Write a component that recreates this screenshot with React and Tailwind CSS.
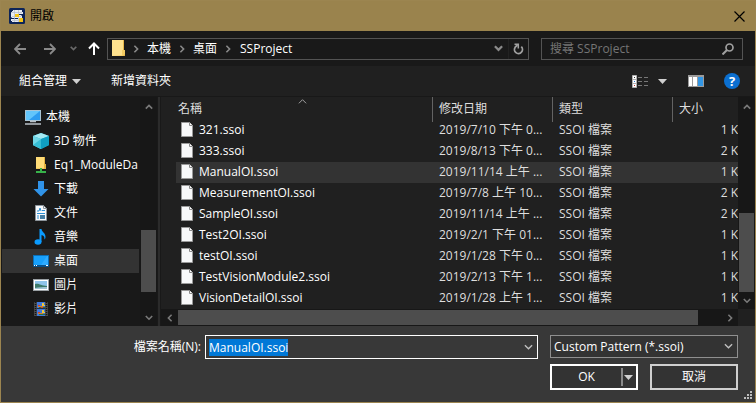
import { useEffect, useRef } from "react";

const FILES = [
  ["321.ssoi", "2019/7/10 下午 0...", "1 K"],
  ["333.ssoi", "2019/8/13 下午 0...", "2 K"],
  ["ManualOI.ssoi", "2019/11/14 上午 ...", "1 K"],
  ["MeasurementOI.ssoi", "2019/7/8 上午 10...", "2 K"],
  ["SampleOI.ssoi", "2019/11/14 上午 ...", "2 K"],
  ["Test2OI.ssoi", "2019/2/1 下午 01...", "1 K"],
  ["testOI.ssoi", "2019/1/28 下午 0...", "1 K"],
  ["TestVisionModule2.ssoi", "2019/2/13 下午 1...", "1 K"],
  ["VisionDetailOI.ssoi", "2019/1/28 上午 1...", "1 K"],
];

function Chevron({ dir = "down", size = 8, width = 2, className = "" }) {
  const d = {
    down: "M1 2.5 5 6.5 9 2.5",
    up: "M1 7 5 3 9 7",
    left: "M7 1 3 5 7 9",
    right: "M3 1 7 5 3 9",
  }[dir];
  return (
    <svg width={size} height={size} viewBox="0 0 10 10" fill="none" stroke="currentColor" strokeWidth={width} className={"shrink-0 " + className} aria-hidden="true">
      <path d={d} />
    </svg>
  );
}

function Caret() {
  return (
    <svg width="9" height="5" viewBox="0 0 9 5" fill="#d0d0d0" className="shrink-0" aria-hidden="true">
      <path d="M0 0h9L4.500 5z" />
    </svg>
  );
}

function AppIcon() {
  return (
    <svg width="16" height="16" viewBox="0 0 16 16" className="shrink-0" aria-hidden="true">
      <rect width="16" height="16" rx="1.500" fill="#0d2458" />
      <path d="M4 2h9v2h1v2H6v1h6l1 1v2h-3v4H3v-1H2v-2h7v-1H3L2 9V4h1V3h1z" fill="#e9ecf2" />
      <path d="M5.500 2v12M9.500 2v12M2 4.500h11M3 8.500h9M3 12.500h6" stroke="#b4bccb" strokeWidth=".7" />
      <rect x="6" y="6" width="4" height="3" fill="#f5c518" />
      <rect x="10" y="10" width="4" height="4" fill="#f5c518" />
    </svg>
  );
}

function FolderIcon() {
  return (
    <svg width="14" height="17" viewBox="0 0 14 17" className="shrink-0" aria-hidden="true">
      <path d="M1 0h12v10h1v6H1z" fill="#e8b84a" />
      <path d="M1 0h11v15.500L1 16z" fill="#ffe28e" />
      <path d="M11 10h3v4l-2 2h-1z" fill="#f4cc63" />
    </svg>
  );
}

function FileIcon() {
  return (
    <svg width="12" height="15" viewBox="0 0 12 15" className="shrink-0" aria-hidden="true">
      <path d="M.5.5h8l3 3v11H.5z" fill="#f8f9fa" stroke="#9a9a9a" />
      <path d="M8.500.5v3h3" fill="#fff" stroke="#8a8a8a" />
    </svg>
  );
}

const ICONS = {
  pc: (
    <>
      <rect x=".5" y="1.500" width="15" height="10" fill="#2d9cf0" stroke="#a9c4d4" />
      <path d="M1 2h14L4 11H1z" fill="#62c5fb" />
      <path d="M5 12.500h6M0 15h16" stroke="#b8c0c6" strokeWidth="1.500" />
    </>
  ),
  cube: (
    <>
      <path d="M0 3 8 0l8 3v9l-8 4-8-4z" fill="#22b8d4" />
      <path d="M0 3 8 0l8 3-8 3z" fill="#a5eaf3" />
      <path d="M0 3l8 3v10l-8-4z" fill="#6fd6e6" />
      <path d="M8 6l8-3v9l-8 4z" fill="#109fc2" />
      <path d="M0 12 8 6v10z" fill="#36bdd4" />
    </>
  ),
  netfolder: (
    <>
      <path d="M3 0h9v7h1v5H3z" fill="#e3b341" />
      <path d="M3 0h8v11.500H3z" fill="#ffdc77" />
      <path d="M8 11v4M3 15h10" stroke="#37b34a" strokeWidth="2" />
    </>
  ),
  download: <path d="M5 0h6v8h4.500L8 15.500.5 8H5z" fill="#3093e8" />,
  doc: (
    <>
      <path d="M2.500.5h8l3 3v12h-11z" fill="#f7f9fb" stroke="#8c949b" />
      <path d="M10.500.5v3h3" fill="none" stroke="#8c949b" />
      <path d="M4 6h2l1-3 1 3M9 5.500h3M4 8.500h8M4 11h2M4 13h2" stroke="#2a8fd6" fill="none" />
      <rect x="7" y="10" width="5" height="4" fill="#467fa5" />
    </>
  ),
  music: (
    <>
      <ellipse cx="5" cy="13" rx="3.500" ry="2.800" fill="#0a9bff" />
      <path d="M6.500 0h2c0 3 4.500 4 4 8.500-.2 1-.5 1.500-1 2 0-3-1-4-3-4.500v7h-2z" fill="#0a9bff" />
    </>
  ),
  desktop: (
    <>
      <rect x=".5" y="2.500" width="15" height="11" fill="#18a0fb" stroke="#0b6fb8" />
      <path d="M8 12 14 3h1v9z" fill="#2fabff" />
      <path d="M0 13h16" stroke="#0a4f86" strokeWidth="2" />
      <path d="M1 12.500h1M3 12.500h1M13 12.500h2" stroke="#fff" />
    </>
  ),
  picture: (
    <>
      <rect x=".5" y="2.500" width="15" height="11" fill="#fff" stroke="#9aa0a4" />
      <rect x="2" y="4" width="12" height="8" fill="#8fc4ea" />
      <path d="M2 7c4-1 6 2 12 2v3H2z" fill="#3d7a6a" />
      <path d="M2 11c4-1 8-1 12-1v2H2z" fill="#9fc3d2" />
    </>
  ),
  video: (
    <>
      <rect x="1" y="1" width="14" height="14" fill="#4a4a4a" />
      <path d="M2.500 1v14M13.500 1v14" stroke="#151515" strokeWidth="1.500" strokeDasharray="1 1" />
      <rect x="4" y="1" width="8" height="14" fill="#3f79dc" />
      <path d="M9 2h2v2h1v1H9zM9 9h2v2h1v1H9z" fill="#efc83a" />
      <path d="M5 5h5v1H5zM5 12h5v1H5z" fill="#d9822c" />
      <path d="M6 6h6v1H6zM6 13h6v1H6z" fill="#2f6e3a" />
      <path d="M4 7.500h8" stroke="#26303f" />
      <path d="M5 4h2v1H5zM8 6h2v1H8zM5 11h2v1H5z" fill="#cf3d2e" />
    </>
  ),
};

const PLACES = [
  ["3D 物件", "cube"],
  ["Eq1_ModuleDa", "netfolder"],
  ["下載", "download"],
  ["文件", "doc"],
  ["音樂", "music"],
  ["桌面", "desktop"],
  ["圖片", "picture"],
  ["影片", "video"],
];

function Place({ label, icon, root }) {
  const active = icon === "desktop";
  return (
    <li>
      <button
        className={
          "flex h-6 w-full items-center gap-[5px] whitespace-nowrap text-left " +
          (root ? "pl-[23px] " : "pl-[31px] ") +
          (active ? "bg-[#333333]" : "")
        }
      >
        <svg width="16" height="16" viewBox="0 0 16 16" className="shrink-0" aria-hidden="true">
          {ICONS[icon]}
        </svg>
        {label}
      </button>
    </li>
  );
}

function VScroll({ thumb }) {
  return (
    <div className="flex w-[17px] shrink-0 flex-col items-center bg-[#171717] px-px text-[#7a7a7a]">
      <div className="flex h-5 items-center"><Chevron dir="up" /></div>
      <div className="grow" />
      <div className={"w-full bg-[#4d4d4d] " + thumb} />
    </div>
  );
}

function Header({ children, sorted, last }) {
  return (
    <th scope="col" className="relative h-[23px] p-0 text-left font-normal text-[#dedede]">
      {sorted && <Chevron dir="up" size={9} width={1} className="absolute top-0 left-[122px] text-[#b0b0b0]" />}
      <span className={sorted ? "pl-[2px]" : "pl-[6px]"}>{children}</span>
      {!last && <span className="absolute top-0 right-0 h-[25px] w-px bg-[#636363]" />}
    </th>
  );
}

export default function App() {
  const nameRef = useRef(null);
  useEffect(() => {
    nameRef.current.focus();
    nameRef.current.select();
  }, []);

  return (
    <div className="flex min-h-screen flex-col border border-[#9c8550] bg-[#383838] font-['Open_Sans','Noto_Sans_CJK_TC',sans-serif] text-[12px] leading-4 text-white">
      <header className="flex h-[30px] items-center bg-[#9a834d] pr-[9px] pl-2 text-black">
        <AppIcon />
        <h1 className="grow pl-[5px]">開啟</h1>
        <button aria-label="關閉" className="p-px">
          <svg width="11" height="11" viewBox="0 0 11 11" stroke="currentColor" strokeWidth="1.200" aria-hidden="true">
            <path d="M.5.5l10 10M10.500.5l-10 10" />
          </svg>
        </button>
      </header>

      <div className="flex h-[35px] items-center bg-[#191919] pr-3 pl-[13px]">
        <div className="flex w-[93px] shrink-0 items-center">
          <button aria-label="上一頁" className="text-[#8a8a8a]">
            <svg width="12" height="12" viewBox="0 0 12 12" fill="none" stroke="currentColor" strokeWidth="1.800" aria-hidden="true">
              <path d="M12 6H1M6 1 1 6l5 5" />
            </svg>
          </button>
          <button aria-label="下一頁" className="ml-[18px] text-[#8a8a8a]">
            <svg width="12" height="12" viewBox="0 0 12 12" fill="none" stroke="currentColor" strokeWidth="1.800" aria-hidden="true">
              <path d="M0 6h11M6 1l5 5-5 5" />
            </svg>
          </button>
          <button aria-label="最近的位置" className="ml-[14px] text-[#6a6a6a]"><Chevron size={7} width={2.5} /></button>
          <button aria-label="上一層" className="ml-[11px]">
            <svg width="12" height="13" viewBox="0 0 12 13" fill="none" stroke="currentColor" strokeWidth="2" aria-hidden="true">
              <path d="M6 13V2M1 6.500l5-5 5 5" />
            </svg>
          </button>
        </div>
        <nav aria-label="路徑" className="flex h-[22px] grow items-center border border-[#535353] pl-[3px]">
          <FolderIcon />
          <Chevron dir="right" className="mx-[7px] text-[#8a8a8a]" />
          <a href="#pc">本機</a>
          <Chevron dir="right" className="mx-[7px] text-[#8a8a8a]" />
          <a href="#desktop">桌面</a>
          <Chevron dir="right" className="mx-[7px] text-[#8a8a8a]" />
          <a href="#project" className="grow pl-px">SSProject</a>
          <button aria-label="先前的位置" className="mr-[5px] text-[#8a8a8a]"><Chevron size={9} width={2.5} /></button>
          <button aria-label="重新整理" className="flex h-full w-5 items-center justify-center border-l border-[#222222] text-[#a0a0a0]">
            <svg width="11" height="12" viewBox="0 0 11 12" fill="none" stroke="currentColor" strokeWidth="1.800" aria-hidden="true">
              <path d="M8.300 3.700A4 4 0 1 1 2.200 4.200L4.500 2" />
              <path d="M1.500 1.300H5.300V5.500" strokeWidth="1.500" />
            </svg>
          </button>
        </nav>
        <label className="ml-3 flex h-[22px] w-[202px] shrink-0 items-center border border-[#535353] px-2">
          <input aria-label="搜尋" placeholder="搜尋 SSProject" className="min-w-0 grow bg-transparent outline-none placeholder:text-[#757575]" />
          <svg width="12" height="12" viewBox="0 0 12 12" fill="none" stroke="#a0a0a0" aria-hidden="true">
            <circle cx="7.500" cy="4.500" r="3.500" strokeWidth="1.700" />
            <path d="M5 7 .5 11.500" strokeWidth="2" />
          </svg>
        </label>
      </div>

      <div className="flex h-[31px] items-center border-b border-[#181818] bg-[#202020] pr-[15px] pl-[18px]">
        <button className="flex items-center gap-[5px]">組合管理<Caret /></button>
        <button className="ml-[30px]">新增資料夾</button>
        <div className="grow" />
        <button aria-label="檢視" className="flex items-center gap-[9px]">
          <svg width="17" height="13" viewBox="0 0 17 13" aria-hidden="true">
            <path d="M.5.5h4v12h-4zM.5 4.500h4M.5 8.500h4" fill="#fff" stroke="#b0b0b0" />
            <path d="M2 2.500h1" stroke="#333" />
            <path d="M2 6.500h1" stroke="#2a7fd4" />
            <path d="M2 10.500h1" stroke="#c43228" />
            <path d="M6 2.500h4M12 2.500h4M6 6.500h4M12 6.500h4M6 10.500h4M12 10.500h4" stroke="#777" />
          </svg>
          <Caret />
        </button>
        <button aria-label="預覽窗格" className="ml-[21px]">
          <svg width="16" height="12" viewBox="0 0 16 12" aria-hidden="true">
            <path fill="#9b9b9b" d="M0 0h16v12H0z" />
            <path fill="#fff" d="M1 2h3v9H1zM5 2h4v9H5z" />
            <path fill="#3296e4" d="M10 2h5v9h-5z" />
          </svg>
        </button>
        <button aria-label="說明" className="ml-5 flex size-4 items-center justify-center rounded-full bg-[#0b6fd0] text-[13px] font-bold">?</button>
      </div>

      <main className="flex h-[229px] bg-[#202020]">
        <aside className="flex w-[157px] shrink-0 bg-[#191919]">
          <ul className="w-[139px] shrink-0 pt-2 pr-px pl-px">
            <Place root label="本機" icon="pc" />
            {PLACES.map(([label, icon]) => (
              <Place key={icon} label={label} icon={icon} />
            ))}
          </ul>
          <div className="flex w-[17px] flex-col">
            <div className="flex grow"><VScroll thumb="h-[62px]" /></div>
            <div className="flex h-[34px] items-end justify-center bg-[#171717] pb-1 text-[#7a7a7a]"><Chevron /></div>
          </div>
        </aside>
        <div className="w-[3px] shrink-0 border-r border-[#191919] bg-[#2b2b2b]" />
        <section className="flex min-w-0 grow flex-col">
          <div className="flex h-[212px]">
            <div className="min-w-0 grow overflow-hidden pl-[15px]">
              <table className="w-full table-fixed border-collapse">
                <colgroup>
                  <col className="w-[257px]" />
                  <col className="w-[120px]" />
                  <col className="w-[120px]" />
                  <col />
                </colgroup>
                <thead>
                  <tr>
                    <Header sorted>名稱</Header>
                    <Header>修改日期</Header>
                    <Header>類型</Header>
                    <Header last>大小</Header>
                  </tr>
                </thead>
                <tbody>
                  {FILES.map(([name, date, size]) => (
                    <tr key={name} className={"h-[21px] align-top leading-[19px] " + (name === "ManualOI.ssoi" ? "bg-[#333333]" : "")}>
                      <td className="p-0">
                        <span className="flex items-center gap-[6px] pl-[5px]"><FileIcon />{name}</span>
                      </td>
                      <td className="p-0 pl-[6px] whitespace-nowrap text-[#dedede]">{date}</td>
                      <td className="p-0 pl-[6px] text-[#dedede]">SSOI 檔案</td>
                      <td className="p-0 text-right whitespace-nowrap text-[#dedede]">{size}</td>
                    </tr>
                  ))}
                </tbody>
              </table>
            </div>
            <div className="flex w-[17px] shrink-0 flex-col bg-[#171717]">
              <div className="flex grow"><VScroll thumb="h-[79px]" /></div>
              <div className="flex h-[17px] items-center justify-center text-[#7a7a7a]"><Chevron /></div>
            </div>
          </div>
          <div className="flex h-[17px]">
            <div className="flex grow items-center bg-[#171717] py-px text-[#7a7a7a]">
              <span className="flex w-[17px] justify-center"><Chevron dir="left" /></span>
              <span className="h-full grow bg-[#4d4d4d]" />
              <span className="flex w-10 justify-end pr-1"><Chevron dir="right" /></span>
            </div>
            <div className="w-[17px]" />
          </div>
        </section>
      </main>

      <footer className="relative grow pt-[9px] pr-[17px]">
        <form className="flex flex-col items-end gap-[5px]" onSubmit={(e) => e.preventDefault()}>
          <div className="flex w-full items-start">
            <label htmlFor="filename" className="w-[204px] shrink-0 pt-1 pr-1 text-right">檔案名稱(N):</label>
            <div className="relative grow">
              <input
                id="filename"
                ref={nameRef}
                defaultValue="ManualOI.ssoi"
                className="h-6 w-full border border-white bg-[#383838] px-[3px] outline-none selection:bg-[#0078d7] selection:text-white"
              />
              <Chevron size={9} width={1.5} className="absolute top-2 right-[5px] text-[#c0c0c0]" />
            </div>
            <div className="relative ml-3 w-[188px] shrink-0">
              <select aria-label="檔案類型" className="block h-[23px] w-full appearance-none border border-[#8f8f8f] bg-[#333333] px-[3px] outline-none">
                <option>Custom Pattern (*.ssoi)</option>
              </select>
              <Chevron size={9} width={1.5} className="pointer-events-none absolute top-[7px] right-[5px] text-[#c0c0c0]" />
            </div>
          </div>
          <div className="flex gap-3">
            <button className="flex h-[26px] w-[88px] items-center border-2 border-white bg-[#333333]">
              <span className="grow">OK</span>
              <span className="flex h-[18px] items-center border-l-2 border-[#8a8a8a] pr-[3px] pl-px"><Caret /></span>
            </button>
            <button className="h-[26px] w-[88px] border-2 border-[#cfcfcf] bg-[#333333]">取消</button>
          </div>
        </form>
        <svg width="8" height="8" viewBox="0 0 8 8" fill="#bdbdbd" className="absolute right-[3px] bottom-[3px]" aria-hidden="true">
          <path d="M6 0h2v2H6zM3 3h2v2H3zM6 3h2v2H6zM0 6h2v2H0zM3 6h2v2H3zM6 6h2v2H6z" />
        </svg>
      </footer>
    </div>
  );
}
